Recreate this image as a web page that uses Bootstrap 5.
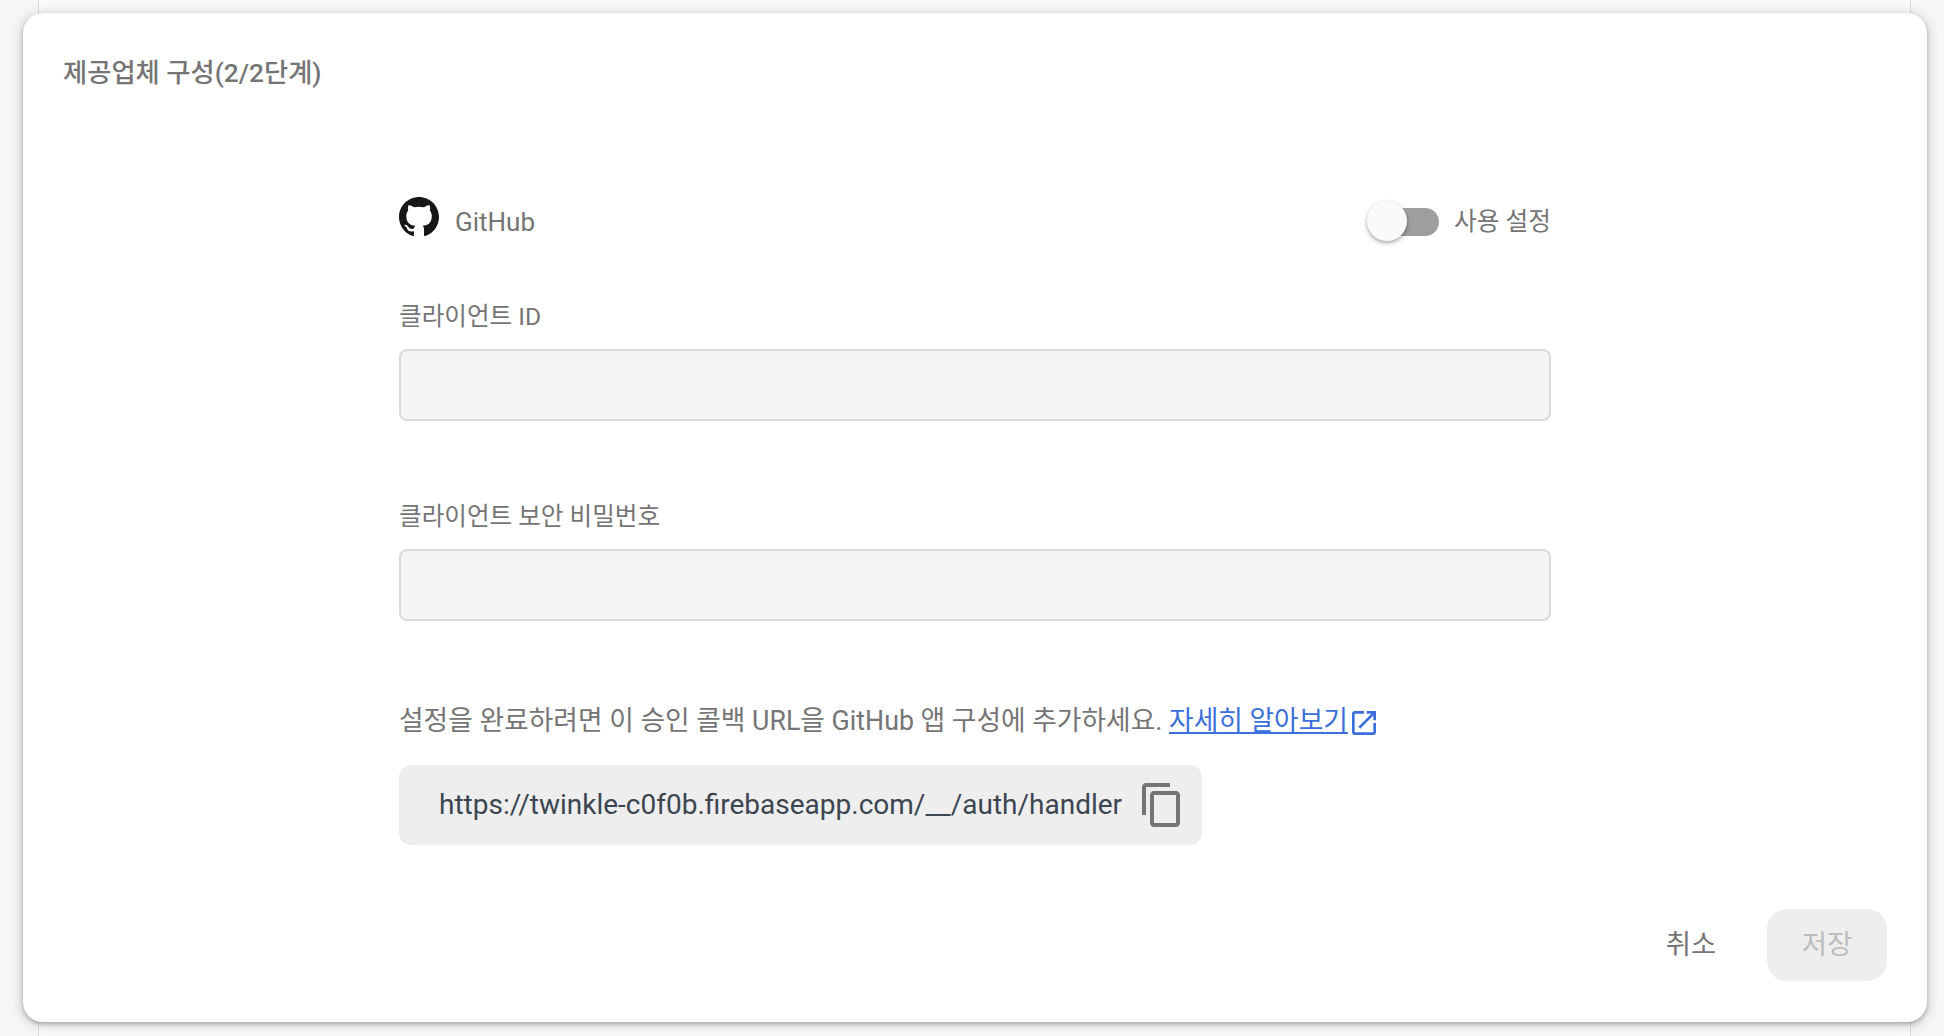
<!DOCTYPE html>
<html lang="ko">
<head>
    <meta charset="UTF-8">
    <title>제공업체 구성</title>
    <link href="https://cdn.jsdelivr.net/npm/bootstrap@5.3.0/dist/css/bootstrap.min.css" rel="stylesheet">
    <style>
        html, body { height: 100%; overflow: hidden; }
        body {
            background: #f5f6f8;
            font-family: Roboto, "Noto Sans CJK KR", sans-serif;
            color: #757575;
        }
        /* panel seen behind the dialog */
        .back-panel {
            margin: 0 33px 0 38px;
            height: 100%;
            background: #fafafa;
            border-left: 1px solid #dadce0;
            border-right: 1px solid #dadce0;
        }
        .dialog-box {
            position: absolute;
            top: 13px;
            left: 23px;
            width: 1904px;
            height: 1009px;
            border: 0;
            border-radius: 20px;
            padding: 41px 40px 40px;
            box-shadow: 0 2px 4px rgba(60, 64, 67, .35), 0 2px 12px 2px rgba(60, 64, 67, .18);
        }
        .dialog-title { font-size: 26.3px; font-weight: 500; line-height: 38px; margin: 0; }
        .dialog-form { width: 1152px; margin: 108px 0 0 336px; }
        .provider-row { height: 44px; }
        .provider-icon { margin-bottom: 10px; }
        .provider-name { font-size: 26px; margin-left: 16px; }
        .toggle-wrap { position: relative; width: 72px; height: 28px; margin-right: 15px; }
        .toggle-track { position: absolute; right: 0; top: 0; width: 60px; height: 28px; border-radius: 14px; background: #9e9e9e; }
        .toggle-thumb { position: absolute; left: 0; top: -7px; width: 40px; height: 40px; border-radius: 50%; background: #fafafa; box-shadow: 0 2px 4px rgba(0, 0, 0, .35); }
        .toggle-label { font-size: 24.7px; }
        .field-label { font-size: 24.6px; line-height: 36px; margin: 0 0 14px; color: #757575; }
        .field-input, .field-input:disabled {
            height: 72px;
            background: #f5f5f5;
            border: 2px solid #dadada;
            border-radius: 8px;
        }
        .field-one { margin-top: 55px; }
        .field-two { margin-top: 78px; }
        .help-text { font-size: 26.75px; line-height: 36px; margin: 82px 0 0; white-space: nowrap; height: 36px; }
        .help-text a { color: #3b6fdc; }
        .help-text svg { fill: #3b6fdc; vertical-align: -9px; margin-left: 0; }
        .url-box {
            width: 803px;
            height: 80px;
            margin-top: 26px;
            padding: 0 16px 0 40px;
            background: #eeeeee;
            border-radius: 12px;
            font-size: 28px;
            color: #3c4650;
        }
        .url-box svg { fill: #757575; }
        .dialog-actions { position: absolute; right: 40px; bottom: 41px; }
        .btn-cancel { font-size: 27.5px; color: #757575; width: 120px; height: 72px; margin-right: 16px; border: 0; }
        .btn-save, .btn-save:disabled {
            font-size: 27.5px;
            color: #bdbdbd;
            background: #eeeeee;
            width: 120px;
            height: 72px;
            border: 0;
            border-radius: 20px;
            opacity: 1;
        }
    </style>
</head>
<body>

    <div class="back-panel"></div>

    <div class="card dialog-box">
        <h2 class="dialog-title">제공업체 구성(2/2단계)</h2>

        <form class="dialog-form">
            <div class="provider-row d-flex align-items-center justify-content-between">
                <div class="d-flex align-items-center">
                    <svg class="provider-icon" width="40" height="40" viewBox="0 0 16 16" fill="#181717"><path d="M8 0C3.58 0 0 3.58 0 8c0 3.54 2.29 6.53 5.47 7.59.4.07.55-.17.55-.38 0-.19-.01-.82-.01-1.49-2.01.37-2.53-.49-2.69-.94-.09-.23-.48-.94-.82-1.13-.28-.15-.68-.52-.01-.53.63-.01 1.08.58 1.23.82.72 1.21 1.87.87 2.33.66.07-.52.28-.87.51-1.07-1.78-.2-3.64-.89-3.64-3.95 0-.87.31-1.59.82-2.15-.08-.2-.36-1.02.08-2.12 0 0 .67-.21 2.2.82.64-.18 1.32-.27 2-.27.68 0 1.36.09 2 .27 1.53-1.04 2.2-.82 2.2-.82.44 1.1.16 1.92.08 2.12.51.56.82 1.27.82 2.15 0 3.07-1.87 3.75-3.65 3.95.29.25.54.73.54 1.48 0 1.07-.01 1.93-.01 2.2 0 .21.15.46.55.38A8.013 8.013 0 0016 8c0-4.42-3.58-8-8-8z"/></svg>
                    <span class="provider-name">GitHub</span>
                </div>
                <div class="d-flex align-items-center">
                    <span class="toggle-wrap"><span class="toggle-track"></span><span class="toggle-thumb"></span></span>
                    <span class="toggle-label">사용 설정</span>
                </div>
            </div>

            <div class="field-one">
                <label class="field-label d-block">클라이언트 ID</label>
                <input type="text" class="form-control field-input" disabled>
            </div>
            <div class="field-two">
                <label class="field-label d-block">클라이언트 보안 비밀번호</label>
                <input type="text" class="form-control field-input" disabled>
            </div>

            <p class="help-text">설정을 완료하려면 이 승인 콜백 URL을 GitHub 앱 구성에 추가하세요. <a href="#">자세히 알아보기</a><svg width="32" height="32" viewBox="0 0 24 24"><path d="M19 19H5V5h7V3H5c-1.11 0-2 .9-2 2v14c0 1.1.89 2 2 2h14c1.1 0 2-.9 2-2v-7h-2v7zM14 3v2h3.59l-9.83 9.83 1.41 1.41L19 6.41V10h2V3h-7z"/></svg></p>

            <div class="url-box d-flex align-items-center justify-content-between">
                <span>https://twinkle-c0f0b.firebaseapp.com/__/auth/handler</span>
                <svg width="48" height="48" viewBox="0 0 24 24"><path d="M16 1H4c-1.1 0-2 .9-2 2v14h2V3h12V1zm3 4H8c-1.1 0-2 .9-2 2v14c0 1.1.9 2 2 2h11c1.1 0 2-.9 2-2V7c0-1.1-.9-2-2-2zm0 16H8V7h11v14z"/></svg>
            </div>
        </form>

        <div class="dialog-actions d-flex">
            <button type="button" class="btn btn-cancel">취소</button>
            <button type="button" class="btn btn-save" disabled>저장</button>
        </div>
    </div>

    <script src="https://cdn.jsdelivr.net/npm/bootstrap@5.3.0/dist/js/bootstrap.bundle.min.js"></script>
</body>
</html>
